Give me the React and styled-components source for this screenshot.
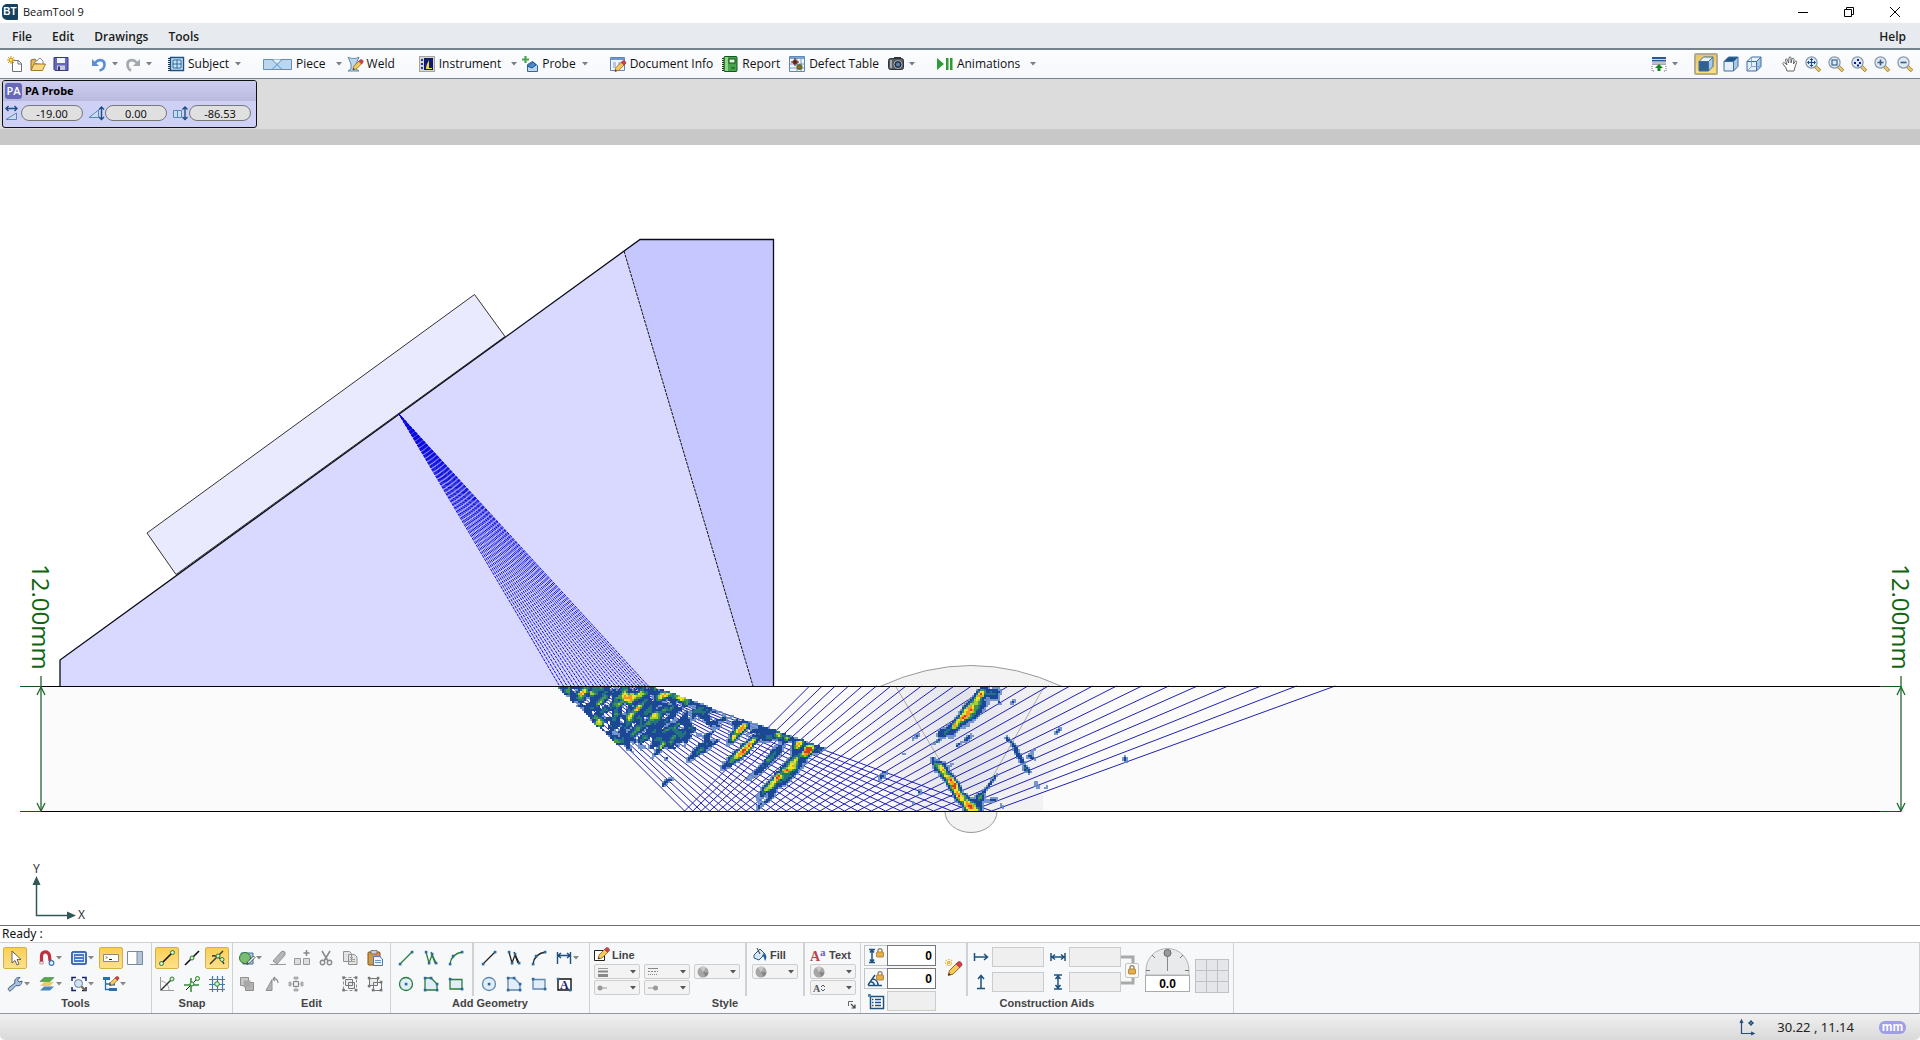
import React from "react";
import styled, { createGlobalStyle } from "styled-components";

const UI = '"Open Sans", "Noto Sans", sans-serif';
const TAHOMA = '"Noto Sans", "Open Sans", sans-serif';
const ARIAL = '"Liberation Sans", Arial, sans-serif';

const Global = createGlobalStyle`
  *, *::before, *::after { box-sizing: border-box; }
  body { margin: 0; background: #fff; color: #111; font: 12px/16px ${UI}; }
  button, input, select { font: inherit; color: inherit; margin: 0; }
  svg { display: block; flex: none; overflow: visible; }
`;

/* ---------- frame ---------- */

const Shell = styled.div`
  display: flex;
  flex-direction: column;
  height: 100vh;
  overflow: hidden;
`;

const TitleBar = styled.header`
  display: flex;
  align-items: center;
  height: 23px;
  padding: 0 2px;
  font-size: 11px;
`;

const AppLogo = styled.span`
  display: grid;
  place-items: center;
  width: 16px;
  height: 16px;
  margin-right: 5px;
  border-radius: 5px 1px 1px 5px;
  background: #15405f;
  color: #fff;
  font: bold 10px/16px ${ARIAL};
`;

const WindowControls = styled.div`
  display: flex;
  margin-left: auto;
`;

const WindowButton = styled.button`
  display: grid;
  place-items: center;
  width: 46px;
  height: 22px;
  padding: 0;
  border: 0;
  background: none;
`;

const MenuBar = styled.nav`
  display: flex;
  gap: 20px;
  height: 27px;
  padding: 2px 14px 0 12px;
  align-items: center;
  background: #e7ebef;
  border-bottom: 2px solid #76828f;
`;

const MenuButton = styled.button`
  padding: 0;
  border: 0;
  background: none;
  color: #1b1b1b;
  font: 600 12px/20px ${UI};
  margin-left: ${(p) => (p.$end ? "auto" : "0")};
`;

const Toolbar = styled.div`
  display: flex;
  align-items: center;
  height: 29px;
  padding: 0 7px;
  background: linear-gradient(#fbfcfe, #f6f8fb);
  border-bottom: 1px solid #76819a;
`;

const ToolGroup = styled.div`
  display: flex;
  align-items: center;
  gap: ${(p) => p.$gap}px;
  margin-left: ${(p) => (p.$end ? "auto" : `${p.$lead || 0}px`)};
`;

const ToolButton = styled.button`
  display: flex;
  align-items: center;
  gap: 4px;
  height: 22px;
  padding: ${(p) => (p.$active ? "0 2px" : "0")};
  border: ${(p) => (p.$active ? "2px solid #b2ab91" : "0")};
  border-radius: 2px;
  background: ${(p) => (p.$active ? "linear-gradient(#e8c763, #fbe07c)" : "none")};
  white-space: nowrap;
`;

const CaretGap = styled.span`
  padding-left: ${(p) => p.$space}px;
`;

const ProbeStrip = styled.section`
  padding: 1px 2px;
  background: #dcdcdc;
`;

const ProbeCard = styled.div`
  width: 255px;
  height: 48px;
  border: 1px solid #111;
  border-radius: 3px;
  background: #cfd0f5;
  overflow: hidden;
`;

const ProbeHead = styled.h2`
  display: flex;
  align-items: center;
  gap: 3px;
  height: 20px;
  margin: 0;
  padding: 0 2px;
  background: linear-gradient(#cdcdf0, #b9bade);
  color: #000;
  font: bold 11px/16px ${TAHOMA};
`;

const ProbeBadge = styled.span`
  width: 17px;
  height: 16px;
  border-radius: 3px;
  background: #6868b8;
  color: #fff;
  font: 600 11px/16px ${UI};
  text-align: center;
`;

const ProbeFields = styled.div`
  display: grid;
  grid-template-columns: repeat(3, 80px);
  gap: 4px;
  padding: 4px 1px 0;
`;

const ProbeField = styled.label`
  display: flex;
  align-items: center;
  gap: 1px;
`;

const PillInput = styled.input`
  width: 62px;
  height: 16px;
  padding: 0;
  border: 1px solid #777;
  border-radius: 8px;
  background: #e0e0e0;
  font: 11px/14px ${TAHOMA};
  text-align: center;
`;

const StripShadow = styled.div`
  height: 16px;
  background: #c8c8c8;
`;

const Workspace = styled.main`
  flex: 1;
  min-height: 0;

  > svg { width: 100%; height: 100%; }
`;

const Prompt = styled.div`
  height: 17px;
  padding-left: 2px;
  border-top: 1px solid #6c6c70;
  font: 12px/16px ${TAHOMA};
`;

/* ---------- ribbon ---------- */

const Ribbon = styled.div`
  display: flex;
  align-items: stretch;
  border: 1px solid #cfd0d2;
  border-width: 1px 1px 1px 0;
  border-bottom-color: #8f96a3;
  background: #f7f8fa;
`;

const Group = styled.section`
  display: grid;
  grid-template-rows: 53px 17px;
  border-right: 1px solid #cfd0d2;
`;

const GroupBody = styled.div`
  display: flex;
  gap: ${(p) => p.$gap || 0}px;
  padding: ${(p) => p.$pad};
`;

const GroupLabel = styled.h3`
  display: grid;
  grid-template-columns: 1fr auto 1fr;
  align-items: start;
  margin: 0;
  padding: 0 4px;
  color: #444;
  font: bold 11px/15px ${ARIAL};

  > span { grid-column: 2; }
  > button { justify-self: end; align-self: center; }
`;

const Rows = styled.div`
  display: grid;
  align-content: start;
  gap: ${(p) => p.$gap ?? 4}px;
`;

const Cols = styled.div`
  display: grid;
  grid-template-columns: ${(p) => p.$cols};
  height: 22px;
`;

const RibbonButton = styled.button`
  display: flex;
  align-items: center;
  justify-self: start;
  gap: 1px;
  height: 22px;
  padding: 0 3px;
  border: 1px solid ${(p) => (p.$active ? "#d5ae45" : "transparent")};
  border-radius: 2px;
  background: ${(p) => (p.$active ? "linear-gradient(#f9cf54, #fde08c)" : "none")};
`;

const Rule = styled.div`
  width: 2px;
  height: 53px;
  margin: 0 ${(p) => p.$space}px;
  background: #d0d1d3;
`;

const StyleColumn = styled.div`
  display: grid;
  grid-template-rows: 19px;
  align-content: start;
`;

const StyleTitle = styled.div`
  display: flex;
  align-items: center;
  gap: 3px;
  color: #444;
  font: bold 11px/16px ${ARIAL};
`;

const SelectGrid = styled.div`
  display: grid;
  grid-template-columns: repeat(${(p) => p.$cols}, 46px);
  gap: 1px 4px;
`;

const SelectBox = styled.label`
  display: grid;
  grid-template-columns: 1fr auto;
  align-items: center;
  height: 15px;
  padding: 0 3px 0 2px;
  border: 1px solid #cdcdcd;
  border-radius: 2px;
  background: #f3f3f3;

  > select {
    grid-area: 1 / 1 / 2 / 3;
    width: 100%;
    height: 13px;
    padding: 0;
    border: 0;
    appearance: none;
    background: none;
  }
  > svg:first-of-type { grid-area: 1 / 1; }
  > svg:last-of-type { grid-area: 1 / 2; }
`;

const SmallButton = styled.button`
  display: grid;
  place-items: center;
  padding: 0;
  border: 0;
  background: none;
`;

const AidGroup = styled(Group)`
  > :nth-child(1) { grid-area: 1 / 1 / 3 / 2; }
  > :nth-child(2) { grid-area: 1 / 2; }
  > :nth-child(3) { grid-area: 2 / 1 / 3 / 3; }
`;

const LockStack = styled.div`
  display: grid;
  grid-template-rows: repeat(3, 21px);
  gap: 2px;
  padding: 2px 0 0 3px;
`;

const LockRow = styled.div`
  display: grid;
  grid-template-columns: 23px 49px;
`;

const LockToggle = styled.button`
  display: grid;
  place-items: center;
  padding: 0;
  border: 1px solid ${(p) => (p.$plain ? "transparent" : "#c4c5c8")};
  border-right: 0;
  background: none;
`;

const NumberInput = styled.input`
  width: ${(p) => p.$width}px;
  height: ${(p) => p.$height}px;
  padding: 0 3px;
  border: 1px solid ${(p) => (p.disabled ? "#cbcbcb" : "#777")};
  background: ${(p) => (p.disabled ? "#efefef" : "#fff")};
  color: #000;
  font: bold 12px/16px ${ARIAL};
  text-align: right;
`;

const AidFields = styled.div`
  display: grid;
  grid-template-columns: repeat(2, 71px);
  grid-template-rows: 20px 20px;
  gap: 5px 6px;
  padding: 4px 0 0 5px;
`;

const AidField = styled.label`
  display: flex;
  align-items: center;
  gap: 3px;
`;

const LinkBracket = styled.div`
  display: grid;
  grid-template-columns: 14px 4px;
  align-items: center;
  height: 44px;
  margin-top: 5px;

  > svg { grid-area: 1 / 1; }
  > button { grid-area: 1 / 1 / 2 / 3; justify-self: end; }
`;

const LinkButton = styled.button`
  display: grid;
  place-items: center;
  width: 14px;
  height: 15px;
  padding: 0;
  border: 1px solid #c4c4c4;
  border-radius: 2px;
  background: #f8f8f8;
`;

const AngleDial = styled.label`
  width: 45px;
  margin: 5px 5px 0 6px;

  > input {
    display: block;
    width: 45px;
    height: 17px;
    padding: 0;
    border: 1px solid #aaa;
    background: #fff;
    color: #000;
    font: bold 12px/15px ${ARIAL};
    text-align: center;
  }
`;

const Swatches = styled.button`
  display: grid;
  grid-template-columns: repeat(3, 1fr);
  gap: 1px;
  width: 34px;
  height: 34px;
  margin: 16px 4px 0 0;
  padding: 1px;
  border: 0;
  background: #bfc1c4;

  > span { background: #e4e6e9; }
`;

const StatusBar = styled.footer`
  display: flex;
  align-items: center;
  justify-content: flex-end;
  height: 26px;
  padding-right: 14px;
  border-radius: 0 0 5px 5px;
  background: linear-gradient(#f0f0f0, #d9d9d9);
  color: #222;
  font: 13px/18px ${TAHOMA};
`;

const Coordinates = styled.output`
  margin: 0 25px 0 22px;
`;

const UnitButton = styled.button`
  width: 27px;
  height: 13px;
  padding: 0;
  border: 0;
  border-radius: 6px;
  background: #a09fe6;
  color: #fff;
  font: bold 12px/10px ${ARIAL};
`;

/* ---------- icons ---------- */

const Svg = ({ w = 16, h = 16, vb, children }) => (
  <svg width={w} height={h} viewBox={vb || `0 0 ${w} ${h}`} fill="none" aria-hidden="true">
    {children}
  </svg>
);

const Caret = ({ color = "#777c88" }) => (
  <Svg w={6} h={4}><path d="M0 0h6L3 3.500z" fill={color} /></Svg>
);

const Dots = ({ pts, c = "#2d6a9a" }) => pts.map(([x, y]) => (
  <rect key={`${x}-${y}`} x={x - 1.2} y={y - 1.2} width="2.600" height="2.600" fill={c} />
));

const Rings = ({ pts, r = 2, c = "#2c7d35" }) => pts.map(([x, y]) => (
  <circle key={`${x}-${y}`} cx={x} cy={y} r={r} fill="#d9f0c4" stroke={c} />
));

const Pencil = ({ x = 0, y = 0, s = 1 }) => (
  <g transform={`translate(${x} ${y}) scale(${s})`}>
    <path d="M1 12l1-4 6-6 3 3-6 6z" fill="#f4c95c" stroke="#94601c" strokeWidth=".8" />
    <path d="M7.500 2.500L9.500.5c1.500-.5 3.500 1.500 3 3l-2 2z" fill="#d0404a" stroke="#8e2a30" strokeWidth=".5" />
    <path d="M1 12l.7-2 1.400 1.400z" fill="#222" />
  </g>
);

const Padlock = ({ x = 0, y = 0 }) => (
  <g transform={`translate(${x} ${y})`}>
    <path d="M2 4V2.600a2 2 0 014 0V4" stroke="#8a8069" strokeWidth="1.300" />
    <rect x=".5" y="4" width="7" height="5" rx=".8" fill="#e5ad4b" stroke="#a97722" strokeWidth=".8" />
  </g>
);

const Lens = ({ children }) => (
  <Svg>
    <path d="M10 10l5 5" stroke="#a88434" strokeWidth="3.600" />
    <path d="M10.500 10.500l4 4" stroke="#eacb73" strokeWidth="2" />
    <circle cx="6.500" cy="6.500" r="5.600" fill="#dce9f7" stroke="#8796a6" strokeWidth="1.200" />
    {children}
  </Svg>
);

const Cube = ({ front = "#e3eefa", top = "#e9f2fc", side = "#a9c8e8", wire }) => (
  <Svg>
    <path d="M1 5.500L5.500 1H15l-4.500 4.500z" fill={top} />
    <path d="M10.500 5.500L15 1v9.500L10.500 15z" fill={side} />
    <path d="M1 5.500h9.500V15H1z" fill={front} />
    <path d="M1 5.500L5.500 1H15v9.500L10.500 15H1zM1 5.500h9.500V15M10.500 5.500L15 1" stroke="#3e6d9c" />
    {wire && <path d="M5.500 1v9.500H15M5.500 10.500L1 15" stroke="#6e97c1" strokeWidth=".8" />}
  </Svg>
);

const ICONS = {
  new: <Svg><path d="M5.500 4.500h6l3 3v8h-9z" fill="#fff" stroke="#69727d" /><path d="M11 4.500v3.500h3.500" stroke="#69727d" /><path d="M4 0v8M0 4h8M1 1l6 6M7 1L1 7" stroke="#d99a10" /><circle cx="4" cy="4" r="1.800" fill="#ffe569" stroke="#d89c15" /></Svg>,
  open: <Svg><path d="M1 14V4l4-1 1 2h6v2" fill="#e6b85a" stroke="#946b21" /><path d="M4 7l6-5 3 3v4z" fill="#fff" stroke="#7f8b97" /><path d="M1 14.500L4 8h11.500l-3 6.500z" fill="#f7d784" stroke="#a67b2a" /></Svg>,
  save: <Svg><path d="M1 1.500h14v13H2l-1-1z" fill="#6668c0" stroke="#34367e" /><path d="M4 2h8v5H4z" fill="#f2f4fb" /><path d="M4 9.500h8V14H4z" fill="#c7cbd8" /><path d="M5 10.500h2V14H5z" fill="#2f3278" /></Svg>,
  undo: <Svg><path d="M4 7c4-5 10-3 9.500 2-.2 3-2.500 5-5 5.500" stroke="#5b8ed2" strokeWidth="2.600" /><path d="M1 3v7h7z" fill="#5b8ed2" /></Svg>,
  redo: <Svg><path d="M12 7C8 2 2 4 2.500 9c.2 3 1.500 4.500 3.500 5.500" stroke="#a3a8ae" strokeWidth="2.600" /><path d="M15 3v7H8z" fill="#a3a8ae" /></Svg>,
  subject: <Svg><path d="M2.500 1.500h13v13h-13z" fill="#cbe3f5" stroke="#1c4f82" strokeWidth="1.400" /><path d="M9 3.500v9M4.500 8h9M5 4h8v8H5z" stroke="#2f6a9f" /><path d="M1 2v13" stroke="#0f3559" strokeWidth="2" strokeDasharray="1 1" /></Svg>,
  piece: <Svg w={29} h={13}><path d="M.5 1.500h28v10H.5z" fill="#bdd6ee" stroke="#5f8fbb" /><path d="M9 1.500l10 10M19 1.500l-10 10" stroke="#5f8fbb" /><path d="M10 1.500h8l-4 4z" fill="#e6f0f9" /></Svg>,
  weld: <Svg><path d="M1 1c2 2 9 2 11 0L9 8v5l3 2H1l3-2V8z" fill="#bcd7ee" stroke="#5d88ad" /><Pencil x={5} y={3} s={0.9} /></Svg>,
  instrument: <Svg><rect x=".5" y=".5" width="15" height="15" fill="#d7d7d2" stroke="#a5a59d" /><path d="M2 3h2v2H2zM2 7h2v2H2zM2 11h2v2H2z" fill="#2438b8" /><rect x="5" y="2" width="9" height="12" fill="#101b6e" /><path d="M7 12c1-6 3-6 3-9v9h3v1H7z" fill="#f1d93a" /></Svg>,
  probe: <Svg><path d="M3.500 0v7M0 3.500h7" stroke="#4aa552" strokeWidth="2.200" /><path d="M5.500 8.500l5-3 5 4v6h-10z" fill="#bcd6f2" stroke="#35679d" /><path d="M5 10l6-4 3 3-4 3z" fill="#4b8bd0" stroke="#235488" /></Svg>,
  docinfo: <Svg><path d="M.5 1.500h14v13H.5z" fill="#eef4fb" stroke="#5e86b6" /><path d="M1 2h13v2H1z" fill="#6d98cc" /><path d="M3 7h3M3 9h3M3 11h3M8 7h5M8 9h4" stroke="#7f9dc0" /><Pencil x={4} y={4} s={0.95} /></Svg>,
  report: <Svg><rect x="2" y=".5" width="13" height="15" rx="1" fill="#46a64b" stroke="#125620" /><path d="M3 1h3v14H3z" fill="#8ed784" /><rect x="7" y="3" width="6" height="4" fill="#def5d7" stroke="#174f20" /><path d="M1 2v13" stroke="#1f3d22" strokeWidth="2" strokeDasharray="1 1" /><path d="M9 12h4" stroke="#174f20" /></Svg>,
  defect: <Svg><path d="M.5.500h15v15H.5z" fill="#f0f5fc" stroke="#5e86b6" /><path d="M1 1h14v2H1z" fill="#7da3d2" /><path d="M1 8h14M1 12h14M8 3v12M12 3v12" stroke="#5e86b6" strokeWidth=".8" /><circle cx="6" cy="6" r="2.500" fill="#8d3b22" /><path d="M2 6h8M6 2v8" stroke="#4d2016" /><circle cx="10.500" cy="11" r="3" fill="#56762b" /><circle cx="10.500" cy="11" r="1.300" fill="#c55224" /></Svg>,
  camera: <Svg><rect x=".5" y="2.500" width="15" height="11" rx="2" fill="#575b61" stroke="#303338" /><path d="M2 4h2v8H2z" fill="#a7abb0" /><circle cx="10" cy="8.500" r="4" fill="#262a30" stroke="#a5b4c5" /><circle cx="10" cy="8.500" r="2" fill="#5d83b3" /><path d="M6 1h7v2H6z" fill="#303338" /></Svg>,
  anim: <Svg><path d="M0 2v12l7-6z" fill="#2f9a35" /><path d="M9 2h2.500v12H9zM13 2h2.500v12H13z" fill="#2f9a35" /></Svg>,
  dock: <Svg><path d="M1 1h14v4H1z" fill="#2f5597" /><path d="M1 5h14v4H1z" fill="#a4a9b1" /><path d="M1 3.500h14M1 7h14" stroke="#d4dbe6" /><path d="M8 8l4 4H9.500v3h-3v-3H4z" fill="#16861b" /><path d="M1 10v5h3M15 10v5h-3" stroke="#707680" strokeDasharray="1 1" /></Svg>,
  hand: <Svg><path d="M5 15l-1-3-3-4c-1-1 1-2 2-1l2 2L3.500 4c0-1.500 1.500-1.500 2 0l1 3L7 2c0-1.500 2-1.500 2 0v5l1-4c.5-1.300 2-1 2 .5L11.500 8l1.500-2.500c.8-1 2-.2 1.600 1L13 11l-1 4z" fill="#fff" stroke="#555" strokeWidth=".9" /></Svg>,
  pan: <Lens><path d="M6.500 2.500v8M2.500 6.500h8M5 4l1.500-1.500L8 4M5 9l1.500 1.500L8 9M4 5L2.500 6.500 4 8M9 5l1.500 1.500L9 8" stroke="#1f4c8d" /></Lens>,
  zoomWindow: <Lens><rect x="4" y="4" width="5" height="5" stroke="#3f6688" strokeWidth="1.200" /></Lens>,
  zoomAll: <Lens><path d="M3 6h2v2H3zM6 3h2v2H6zM8 6h2v2H8zM6 8.500h2v2H6z" fill="#12189a" /></Lens>,
  zoomIn: <Lens><path d="M6.500 3.500v6M3.500 6.500h6" stroke="#3c5d7d" strokeWidth="1.600" /></Lens>,
  zoomOut: <Lens><path d="M3.500 6.500h6" stroke="#3c5d7d" strokeWidth="1.600" /></Lens>,
  skew: <Svg><path d="M2 3.500h11M4.500 1L2 3.500 4.500 6M10.500 1L13 3.500 10.500 6" stroke="#1d4f85" strokeWidth="1.400" /><path d="M2 14.500h10.500V8z" fill="#c8dcef" stroke="#5a88b4" /></Svg>,
  height: <Svg><path d="M1 12.500h9.500V5z" fill="#c8dcef" stroke="#5a88b4" /><path d="M13.500 3v11M11 4.500L13.500 2 16 4.500M11 12l2.500 2.500L16 12" stroke="#1d4f85" strokeWidth="1.400" /></Svg>,
  offset: <Svg><path d="M1.500 5.500h8v7h-8zM5.500 5.500v7" fill="#c8dcef" stroke="#5a88b4" /><path d="M13 3v11M10.500 4.500L13 2l2.500 2.500M10.500 12l2.500 2.500 2.500-2.500" stroke="#1d4f85" strokeWidth="1.400" /></Svg>,

  select: <Svg><path d="M5 1v12l3-2.500L10 15l2-1-2-4.500h4z" fill="#fff" stroke="#555" strokeWidth=".9" /></Svg>,
  magnet: <Svg><path d="M2.500 13V6.500C2.500.5 10 .5 10.500 6l.5 5" stroke="#c22e3a" strokeWidth="3.200" /><path d="M.8 11.500h3.400V14H.8z" fill="#f3e6e6" stroke="#955" strokeWidth=".5" /><circle cx="12.500" cy="13" r="2.300" fill="#eaf4ff" stroke="#3a76b8" strokeWidth="1.200" /></Svg>,
  screen: <Svg><rect x=".7" y="1.700" width="14.600" height="12.600" rx="1" fill="#4a78cc" stroke="#2a4f9e" /><rect x="2.500" y="3.500" width="11" height="9" fill="#4a78cc" stroke="#e5effb" /><path d="M4 6.500h8M4 9.500h8" stroke="#e5effb" /></Svg>,
  command: <Svg><path d="M.5 4.500h15v7H.5z" fill="#fff" stroke="#8a8a8a" /><path d="M3 6.500l1 1-1 1M6 9.500h3" stroke="#222" /></Svg>,
  panel: <Svg><path d="M.5 1.500h15v13H.5z" fill="#fff" stroke="#7c8996" /><path d="M10 1.500h5.500v13H10z" fill="#b3c7da" stroke="#7c8996" /></Svg>,
  wrench: <Svg><path d="M2 14.500c-1-1-1-2 0-3L8 7C7 4 9 1 13 1.500L10.500 4l1.500 2 3-1c0 4-3 5.500-6 4.500l-5 5c-.7.700-1.300.700-2 0z" fill="#a9c1db" stroke="#3d5d82" /></Svg>,
  layers: <Svg><path d="M1 14.500l4-4h10l-4 4z" fill="#4a86c6" /><path d="M1 10l4-4h10l-4 4z" fill="#e8cf60" /><path d="M1 5.500l4-4h10l-4 4z" fill="#57a74b" stroke="#2f7b2e" strokeWidth=".5" /></Svg>,
  zoomBox: <Svg><path d="M1 5V1.500h4M11 1.500h4V5M1 11v3.500h4M15 11v3.500h-4" stroke="#15206b" strokeWidth="1.500" /><circle cx="7.500" cy="7.500" r="4" fill="#cfe1f3" stroke="#68809a" /><path d="M10.500 10.500l4 4" stroke="#7d5f31" strokeWidth="2" /></Svg>,
  tree: <Svg><path d="M0 1h7v3H0zM6 6.500h6v3H6zM6 12h8v3H6z" fill="#276fae" /><path d="M2.500 4v9.500H6M2.500 8H6" stroke="#276fae" strokeWidth="1.300" /><Pencil x={6} y={0} s={0.8} /></Svg>,

  snapEnd: <Svg><path d="M2 14L14 2" stroke="#111" strokeWidth="1.600" /><Rings pts={[[2.5, 13.5], [13.5, 2.5]]} /></Svg>,
  snapMid: <Svg><path d="M1 15L15 1" stroke="#111" strokeWidth="1.600" /><Rings pts={[[8, 8]]} /></Svg>,
  snapNear: <Svg><path d="M1 14L14 1M3 6c5-1 9 2 12 8" stroke="#333" strokeWidth="1.400" /><Rings pts={[[9, 6], [13, 9.5]]} /></Svg>,
  snapAngle: <Svg><path d="M1.500 1v13.500H15" stroke="#999" /><path d="M1 5c5 0 9 4 9 9" stroke="#aaa" /><path d="M2 14L13 3" stroke="#333" strokeWidth="1.500" /><Rings pts={[[13, 3]]} /></Svg>,
  snapCross: <Svg><path d="M0 9h15M7 2v14" stroke="#2c8c35" strokeWidth="1.500" /><path d="M2 14L14 2" stroke="#222" /><Rings pts={[[8, 8], [13.5, 2.5]]} /></Svg>,
  snapGrid: <Svg><path d="M0 3.500h16M0 8.500h16M0 13.500h16M3.500 0v16M8.500 0v16M13.500 0v16" stroke="#3f7cb5" strokeWidth="1.200" /><Rings pts={[[8, 8]]} r={2.3} /></Svg>,

  region: <Svg><path d="M2 3h12v11H4z" fill="#a9c9ea" stroke="#486f96" /><circle cx="6" cy="8" r="5.500" fill="#78bd72" stroke="#2b7b33" /><path d="M8 14.500l1-3 5.500-5.500 1.500 1.500-5.500 5.500z" fill="#eef1f5" stroke="#333" strokeWidth=".8" /></Svg>,
  erase: <Svg><path d="M3 11L12 1l3 1v3l-8 9z" fill="#b5b5b5" stroke="#959595" /><path d="M0 14.500h16" stroke="#999" /></Svg>,
  copyAdd: <Svg><path d="M.5 8.500h6v6h-6zM9.500 8.500h6v6h-6z" fill="#dedede" stroke="#999" /><path d="M12.500 0v6M9.500 3h6" stroke="#888" strokeWidth="1.500" /></Svg>,
  cut: <Svg><path d="M4 1l6 10M12 1L6 11" stroke="#8b8b8b" strokeWidth="1.600" /><circle cx="4.500" cy="12.500" r="2.200" stroke="#8b8b8b" strokeWidth="1.400" /><circle cx="11.500" cy="12.500" r="2.200" stroke="#8b8b8b" strokeWidth="1.400" /></Svg>,
  copy: <Svg><path d="M1.500 1.500h6l2 2v8h-8zM6.500 4.500h6l2.500 2.500v7.500H6.500z" fill="#e3e3e3" stroke="#929292" /><path d="M8 9.500h5M8 11.500h5M8 7.500h3" stroke="#a2a2a2" /></Svg>,
  paste: <Svg><rect x="1" y="2" width="12" height="13" rx="1" fill="#d49b3e" stroke="#7b5620" /><path d="M4 .5h6V4H4z" fill="#cbd0d6" stroke="#666" strokeWidth=".8" /><path d="M6.500 6.500h6L15.500 9v6.500h-9z" fill="#f1f6fc" stroke="#4c78a9" /><path d="M8 10.500h6M8 12.500h6" stroke="#6c94c0" /></Svg>,
  order: <Svg><path d="M1.500 1.500h8v8h-8z" fill="#c9c9c9" stroke="#8f8f8f" /><path d="M6.500 6.500h8v8h-8z" fill="#b4b4b4" stroke="#8f8f8f" /><path d="M4.500 4.500h7v7h-7z" fill="#a8a8a8" /></Svg>,
  rotate: <Svg><path d="M2 14.500h6v-11z" fill="#b5b5b5" stroke="#909090" /><path d="M9 3c3-1 5 1 5 4M9 3l2-2M9 3l2 2" stroke="#888" strokeWidth="1.200" /></Svg>,
  explode: <Svg><path d="M8 1v14M1 8h14" stroke="#999" strokeDasharray="2 1" /><rect x="5.500" y="5.500" width="5" height="5" fill="#e6e6e6" stroke="#8a8a8a" /><path d="M6 1h4v2H6zM6 13h4v2H6zM1 6h2v4H1zM13 6h2v4h-2z" fill="#bdbdbd" stroke="#8a8a8a" strokeWidth=".6" /></Svg>,
  group: <Svg><path d="M1.500 1.500h13v13h-13z" stroke="#8e8e8e" strokeDasharray="3 2" /><path d="M3.500 3.500h7v6h-7zM6.500 6.500h6v6h-6z" fill="#ececec" stroke="#777" /><Dots pts={[[1.5, 1.5], [14, 1.5], [1.5, 14], [14, 14]]} c="#777" /></Svg>,
  ungroup: <Svg><path d="M2.500 2.500h8v7h-8z" fill="#ececec" stroke="#777" /><path d="M6.500 6.500h8v8h-8z" stroke="#777" /><Dots pts={[[2, 2], [11, 2], [2, 10], [14, 6], [14, 14], [6, 14]]} c="#777" /></Svg>,

  pencilBox: <Svg w={15}><path d="M.5 3.500h10v10H.5z" fill="#fff" stroke="#222" /><Pencil x={3} y={0} /></Svg>,
  bucket: <Svg w={15}><path d="M2 8l6-6 5 5-6 6-5-2z" fill="#d7e6f4" stroke="#2c567f" /><path d="M5 1l3 6" stroke="#333" /><path d="M12 6c3 2 3 5 1 8-1-3-1-5-3-5z" fill="#1f5f9f" /></Svg>,
  draw: <Svg w={17} h={17}><Pencil x={2} y={2} s={1.2} /><path d="M4 0v8M0 4h8M1 1l6 6M7 1L1 7" stroke="#e3b426" strokeDasharray="1 1" strokeWidth="1.400" /></Svg>,
  right: <Svg><path d="M1.500 4v8M2 8h12M11 5l3.500 3-3.500 3" stroke="#1d517e" strokeWidth="1.500" /></Svg>,
  up: <Svg><path d="M8 14V2M5 5l3-3.500L11 5M4 14.500h8" stroke="#1d517e" strokeWidth="1.500" /></Svg>,
  spanX: <Svg><path d="M1 4v8M15 4v8M2 8h12M5 5.500L2 8l3 2.500M11 5.500L14 8l-3 2.500" stroke="#1d517e" strokeWidth="1.500" /></Svg>,
  spanY: <Svg><path d="M4 1h8M4 15h8M8 2v12M5.500 5L8 2l2.500 3M5.500 11L8 14l2.500-3" stroke="#1d517e" strokeWidth="1.500" /></Svg>,
  lockLength: <Svg w={18}><path d="M2 1.500h6M2 14.500h6M5 2v12M3 4.500L5 2l2 2.500M3 11.500L5 14l2-2.500" stroke="#1d517e" strokeWidth="1.500" /><Padlock x={9} /></Svg>,
  lockAngle: <Svg w={18}><path d="M1 14.500h14M1 14L8 4M5 8c4 0 6 3 6 6M4 11c2 0 3 1 3 3" stroke="#1d517e" strokeWidth="1.500" /><Padlock x={9} /></Svg>,
  list: <Svg><path d="M2.500 2.500h13v12h-13z" fill="#fff" stroke="#1d517e" strokeWidth="1.500" /><path d="M4 5.500h1.500M4 8.500h1.500M4 11.500h1.500M7 5.500h6M7 8.500h6M7 11.500h6" stroke="#1d517e" strokeWidth="1.500" /><path d="M0 0h3v3H0z" fill="#4b87bb" /></Svg>,
  launcher: <Svg w={8} h={8}><path d="M.5 5V.5H5" stroke="#666" /><path d="M3 3l4 4M7 3.500V7H3.500" stroke="#444" strokeWidth="1.200" /></Svg>,
  weight: <Svg w={12} h={10}><path d="M1 1.500h10" stroke="#999" /><path d="M1 4.500h10" stroke="#888" strokeWidth="2" /><path d="M1 8.500h10" stroke="#888" strokeWidth="3" /></Svg>,
  dash: <Svg w={12} h={10}><path d="M1 1.500h10" stroke="#888" /><path d="M1 4.500h10" stroke="#888" strokeDasharray="2 1" /><path d="M1 7.500h10" stroke="#888" strokeDasharray="1 1" /></Svg>,
  ball: <Svg w={12} h={12}><circle cx="6" cy="6" r="5.500" fill="#a6a6a6" /><path d="M6 6L3 1.500A5.500 5.500 0 019 1.500z" fill="#c9c9c9" /><path d="M6 6l5.500.500a5.500 5.500 0 01-3 4.300z" fill="#858585" /></Svg>,
  capStart: <Svg w={12} h={10}><circle cx="3" cy="5" r="2.500" fill="#999" /><path d="M3 5h7" stroke="#999" /></Svg>,
  capEnd: <Svg w={12} h={10}><circle cx="8.500" cy="5" r="2.500" fill="#999" /><path d="M1 5h7" stroke="#999" /></Svg>,
  origin: <Svg><path d="M2.500 2v12.500H14M1 4l1.500-3L4 4M12 13l3 1.500L12 16" stroke="#1f4f80" strokeWidth="1.200" /><path d="M12 1v6M9 4h6" stroke="#1f4f80" /><circle cx="12" cy="4" r="1.700" stroke="#1f4f80" /></Svg>,
};

/* Geometry tools share their shapes; the green set draws construction parts, the other annotations. */
const SHAPES = {
  line: { d: "M2 14L14 2", pts: [[2, 14], [14, 2]] },
  poly: { d: "M3 2l3 11 3-8 3 8M8 2l5 11", pts: [[3, 2], [6, 13], [9, 4], [13, 13]] },
  arc: { d: "M2 14C3 7 7 3 15 2", pts: [[2, 14], [5, 6], [14, 2]] },
  circle: { d: "M8 1.500a6.500 6.500 0 100 13 6.500 6.500 0 100-13z", pts: [[8, 8]], fill: 1 },
  polygon: { d: "M2 2h6l6 6v6H2z", pts: [[2, 2], [8, 2], [14, 8], [14, 14], [2, 14]], fill: 1 },
  rect: { d: "M2 3.500h12v9.500H2z", pts: [[2, 3], [14, 13]], fill: 1 },
};

const Shape = ({ name, green }) => {
  const s = SHAPES[name];
  const stroke = green ? "#2a7d3c" : s.fill ? "#5f87b3" : "#222";
  return (
    <Svg>
      <path d={s.d} stroke={stroke} strokeWidth="1.300" fill={s.fill ? "#e1edf8" : "none"} />
      <Dots pts={s.pts} />
    </Svg>
  );
};

/* ---------- scan drawing ---------- */

const SURFACE = 686;
const BACKWALL = 811;
const SOURCE = { x: 399, y: 414 };
const VELOCITY_RATIO = 0.719;

/* One beam per degree from 45 to 70, refracted at the surface and reflected at the back wall. */
const BEAMS = Array.from({ length: 26 }, (_, i) => {
  const angle = ((45 + i) * Math.PI) / 180;
  const wedge = Math.asin(Math.sin(angle) * VELOCITY_RATIO);
  const entry = SOURCE.x + (SURFACE - SOURCE.y) * Math.tan(wedge);
  const leg = (BACKWALL - SURFACE) * Math.tan(angle);
  return { entry, floor: entry + leg, exit: entry + 2 * leg };
});

/* Echoes: centre x, centre y, half length, half width, rise angle, amplitude */
const ECHOES = [
  [583, 692, 9, 5, 20, 0.85], [628, 696, 9, 5, 20, 0.8], [634, 710, 12, 4, 50, 0.85], [654, 713, 10, 4, 40, 0.75],
  [662, 694, 10, 6, 10, 0.7], [682, 698, 10, 5, -20, 0.75], [597, 720, 8, 6, 30, 0.6], [612, 738, 10, 8, 40, 0.42],
  [660, 746, 12, 3, 50, 0.6], [603, 694, 6, 6, 30, 0.5], [640, 728, 12, 4, 45, 0.5], [616, 706, 8, 5, 30, 0.5],
  [683, 732, 14, 5, 35, 0.42], [705, 745, 11, 6, 35, 0.4], [693, 754, 11, 4, 45, 0.32], [670, 725, 10, 5, 40, 0.4],
  [702, 708, 10, 5, -20, 0.5], [668, 779, 7, 2.5, 25, 0.3], [663, 784, 4, 2, 50, 0.28], [665, 758, 4, 2, 50, 0.28],
  [735, 733, 11, 4, 52, 0.93], [745, 725, 6, 4, 10, 0.6], [745, 747, 15, 4, 45, 0.8], [733, 757, 22, 5, 42, 0.36],
  [771, 734, 14, 6, 15, 0.5], [760, 726, 8, 4, -10, 0.35], [785, 737, 10, 4, -15, 0.42], [762, 766, 20, 4, 42, 0.42],
  [775, 750, 14, 4, 45, 0.38], [798, 744, 8, 5, 50, 0.8], [807, 749, 9, 4, 50, 0.9], [792, 761, 12, 5, 46, 0.55],
  [778, 775, 12, 4, 46, 0.7], [764, 789, 12, 4, 46, 0.45], [788, 774, 26, 6, 44, 0.38], [758, 806, 5, 3, 50, 0.28],
  [818, 748, 8, 4, 10, 0.42], [768, 798, 8, 3, 50, 0.28],
  [979, 694, 8, 4, 55, 0.7], [968, 708, 15, 5, 50, 0.8], [955, 724, 10, 4, 45, 0.7], [975, 712, 20, 6, 48, 0.36],
  [943, 731, 9, 5, 25, 0.4], [992, 692, 8, 6, 20, 0.36], [936, 741, 6, 1.5, 35, 0.35], [951, 736, 4, 3, 60, 0.3],
  [967, 737, 7, 3, 40, 0.3], [957, 744, 4, 2, 30, 0.28], [915, 736, 6, 2.5, 45, 0.28], [903, 753, 5, 2, 35, 0.24],
  [998, 701, 5, 2, -55, 0.28], [1012, 701, 5, 2.5, 50, 0.28], [1057, 730, 6, 2.5, 50, 0.28],
  [1006, 738, 4, 2, -50, 0.3], [1017, 753, 17, 3, -62, 0.42], [1030, 753, 7, 3, 50, 0.28], [1032, 757, 5, 2, -30, 0.28],
  [1026, 769, 5, 2.5, -40, 0.3], [1036, 784, 5, 3, -60, 0.3], [1045, 787, 2, 3, 0, 0.28], [1124, 758, 5, 3, -70, 0.28],
  [932, 759, 4, 2, -60, 0.3], [938, 765, 8, 6, -50, 0.42], [946, 775, 12, 5, -52, 0.6], [956, 790, 16, 5, -57, 0.75],
  [968, 804, 12, 5, -42, 0.6], [975, 809, 8, 4, 10, 0.5], [979, 797, 8, 5, 40, 0.36], [989, 783, 17, 2, 53, 0.36],
  [951, 763, 4, 2, 35, 0.26], [993, 799, 8, 3, 15, 0.28], [1001, 805, 6, 2, -55, 0.26],
  [880, 776, 5, 4, 20, 0.3], [884, 771, 2, 3, 70, 0.28], [919, 791, 3, 5, 0, 0.26], [912, 802, 2, 3, 0, 0.26],
];

const PALETTE = [
  [0.98, "#d4401c"], [0.84, "#f4942a"], [0.72, "#f0e12f"], [0.63, "#a6cc3c"], [0.54, "#459850"],
  [0.45, "#24747f"], [0.26, "#1b4795"], [0.15, "#6288c4"],
];

const hash = (x, y) => {
  const n = Math.sin(x * 127.1 + y * 311.7) * 43758.5453;
  return n - Math.floor(n);
};

const noise = (x, y) => {
  const ix = Math.floor(x);
  const iy = Math.floor(y);
  const fx = x - ix;
  const fy = y - iy;
  const a = hash(ix, iy) * (1 - fx) + hash(ix + 1, iy) * fx;
  const b = hash(ix, iy + 1) * (1 - fx) + hash(ix + 1, iy + 1) * fx;
  return a * (1 - fy) + b * fy;
};

const amplitudeAt = (x, y) => {
  const grain = noise((x * 0.77 - y * 0.64) / 6, (x * 0.64 + y * 0.77) / 3.5);
  const fine = noise(x / 3.3 + 40, y / 3.3);
  let echo = 0;
  for (const [cx, cy, len, wid, deg, amp] of ECHOES) {
    const r = (deg * Math.PI) / 180;
    const dx = x - cx;
    const dy = y - cy;
    const u = (dx * Math.cos(r) - dy * Math.sin(r)) / len;
    const v = (dx * Math.sin(r) + dy * Math.cos(r)) / wid;
    const d = u * u + v * v;
    if (d < 6) echo += amp * Math.exp(-d);
  }
  let value = echo * (0.45 + grain * 0.5 + fine * 0.6);
  const roof = SURFACE + Math.max(0, (x - 652) * 0.36);
  const left = 556 + (y - SURFACE) * 1.05;
  const floor = x < 625 ? 752 : 752 - (x - 625) * 0.1;
  if (x > left && y > roof && y < floor) {
    const fade = x < 660 ? 1 : Math.max(0, 1 - (x - 660) / 190);
    const depth = 1 - Math.max(0, (y - roof) / (floor - roof)) * 0.25;
    const band = y - roof < 10 && x < 830 ? 0.75 : 0;
    const n = (grain * 0.75 + fine * 0.35) * Math.max(fade * depth, band);
    if (n > 0.36) value = Math.max(value, 0.2 + (n - 0.36) * 0.85 + echo * 0.35);
  }
  if (x < 850 && (y < roof - 1 || x < left - 1)) value = 0;
  return value;
};

const CELL = 2;

const SCAN_LAYERS = (() => {
  const paths = PALETTE.map(() => "");
  for (let y = SURFACE + 1; y < BACKWALL; y += CELL) {
    let start = 0;
    let level = -1;
    for (let x = 550; x <= 1140; x += CELL) {
      const value = amplitudeAt(x, y);
      const next = PALETTE.findIndex(([min]) => value >= min);
      if (next !== level) {
        if (level >= 0) paths[level] += `M${start} ${y}H${x}v${CELL}H${start}z`;
        start = x;
        level = next;
      }
    }
  }
  return paths;
})();

const Dimension = ({ tail, head, x }) => (
  <g stroke="#1c6b2a">
    <path d={`M${tail} 686.500H${head}M${tail} 811.500H${head}`} stroke="#0c5a12" />
    <path d={`M${x} 676v135`} stroke="#3f7a4c" strokeWidth="1.500" />
    <path d={`M${x - 4} 695L${x} 687l4 8M${x - 4} 803l4 8 4-8`} fill="none" strokeWidth="1.300" />
    <text transform={`translate(${x - 9} 564) rotate(90)`} fill="#0f650f" stroke="none"
      fontFamily={UI} fontSize="24">12.00mm</text>
  </g>
);

const ScanPlan = () => (
  <svg viewBox="0 145 1920 780" role="img" aria-label="Scan plan">
    <defs>
      <linearGradient id="zone" x1="0" x2="1">
        <stop offset="0" stopColor="#e4e4ec" stopOpacity="0" />
        <stop offset=".45" stopColor="#e0e0ea" stopOpacity=".9" />
        <stop offset="1" stopColor="#e8e8f0" stopOpacity="0" />
      </linearGradient>
    </defs>
    <rect x="41" y="686" width="1860" height="125" fill="#fbfbfb" />
    <path d="M60 686.500V660L640 239.500h133.500v447z" fill="#d9d9ff" />
    <path d="M624 251l16-11.500h133.500v447H753z" fill="#c7c7ff" />
    <path d="M176 574.500L147 533 474.500 294.500 505 336.500z" fill="#eaeaff" stroke="#333" strokeWidth="1" />
    <path d="M60 686.500V660L640 239.500h133.500v447" fill="none" stroke="#0b0b18" strokeWidth="1.300" />
    <path d="M624 251l129 435" stroke="#111" strokeDasharray="3 1" />
    <path d="M840 687h270l-67 103v21H899z" fill="url(#zone)" />
    <path d="M899 811V790h144v21z" fill="#f2f2f4" opacity=".7" />
    <g fill="#f3f3f3" stroke="#999">
      <path d="M880 686.500Q971 644.500 1062 686.500z" />
      <path d="M945 811.500a26 21 0 0052 0z" />
    </g>
    <path d="M896 687l74 124M1044 687l-71 124" stroke="#aaa" />
    {BEAMS.map((b) => (
      <g key={b.entry} fill="none">
        <path d={`M${SOURCE.x} ${SOURCE.y}L${b.entry} ${SURFACE}`} stroke="#0a0ae0" strokeDasharray="3 1" />
        <path d={`M${b.entry} ${SURFACE}L${b.floor} ${BACKWALL}L${b.exit} ${SURFACE}`} stroke="#2020b4" />
      </g>
    ))}
    {SCAN_LAYERS.map((d, i) => <path key={PALETTE[i][1]} d={d} fill={PALETTE[i][1]} opacity={i > 6 ? 0.85 : 1} />)}
    <path d="M41 686.500h1839M41 811.500h1839" stroke="#000" />
    <Dimension tail={20} head={41} x={41} />
    <Dimension tail={1880} head={1901} x={1901} />
    <g fill="#315858">
      <path d="M36.500 884v31.500H68" fill="none" stroke="#315858" strokeWidth="1.500" />
      <path d="M36.500 876l4 9h-8zM76 915.500l-9-4v8z" />
    </g>
    <g fill="#333" fontFamily={TAHOMA} fontSize="12">
      <text x="33" y="873">Y</text>
      <text x="78" y="919">X</text>
    </g>
  </svg>
);

/* ---------- composed controls ---------- */

const Tool = ({ icon, text, label, caret, space = 5, active }) => (
  <ToolButton type="button" $active={active} aria-label={label || text}>
    {typeof icon === "string" ? ICONS[icon] : icon}
    {text}
    {caret && <CaretGap $space={space - 4}><Caret /></CaretGap>}
  </ToolButton>
);

const RTool = ({ icon, label, caret, active }) => (
  <RibbonButton type="button" aria-label={label} $active={active}>
    {typeof icon === "string" ? ICONS[icon] : icon}
    {caret && <Caret color="#888" />}
  </RibbonButton>
);

const Picker = ({ icon, label }) => (
  <SelectBox>
    <select aria-label={label} defaultValue=""><option value="" /></select>
    {typeof icon === "string" ? ICONS[icon] : icon}
    <Caret color="#555" />
  </SelectBox>
);

const RibbonGroup = ({ label, pad, gap, launcher, children }) => (
  <Group>
    <GroupBody $pad={pad} $gap={gap}>{children}</GroupBody>
    <GroupLabel>
      <span>{label}</span>
      {launcher && <SmallButton type="button" aria-label={`${label} options`}>{ICONS.launcher}</SmallButton>}
    </GroupLabel>
  </Group>
);

const GEOMETRY = [["line", "poly", "arc"], ["circle", "polygon", "rect"]];

const TextGlyph = () => (
  <Svg>
    <path d="M2 3h13v11H2z" fill="#fff" stroke="#111" strokeWidth="1.400" />
    <text x="4" y="13" fontFamily="Liberation Serif, serif" fontWeight="bold" fontSize="12" fill="#23236b">A</text>
    <Dots pts={[[2, 3], [14, 14]]} />
  </Svg>
);

const App = () => (
  <>
    <Global />
    <Shell>
      <TitleBar>
        <AppLogo>BT</AppLogo>
        <span>BeamTool 9</span>
        <WindowControls>
          <WindowButton type="button" aria-label="Minimize"><Svg w={10} h={10}><path d="M0 5.500h10" stroke="#000" /></Svg></WindowButton>
          <WindowButton type="button" aria-label="Restore"><Svg w={10} h={10}><path d="M.5 2.500h7v7h-7zM2.500 2.500v-2h7v7h-2" stroke="#000" /></Svg></WindowButton>
          <WindowButton type="button" aria-label="Close"><Svg w={10} h={10}><path d="M0 0l10 10M10 0L0 10" stroke="#000" /></Svg></WindowButton>
        </WindowControls>
      </TitleBar>

      <MenuBar>
        <MenuButton type="button">File</MenuButton>
        <MenuButton type="button">Edit</MenuButton>
        <MenuButton type="button">Drawings</MenuButton>
        <MenuButton type="button">Tools</MenuButton>
        <MenuButton type="button" $end>Help</MenuButton>
      </MenuBar>

      <Toolbar>
        <ToolGroup $gap={7}>
          <Tool icon="new" label="New" />
          <Tool icon="open" label="Open" />
          <Tool icon="save" label="Save" />
        </ToolGroup>
        <ToolGroup $gap={7} $lead={22}>
          <Tool icon="undo" label="Undo" caret />
          <Tool icon="redo" label="Redo" caret />
        </ToolGroup>
        <ToolGroup $lead={16}>
          <Tool icon="subject" text="Subject" caret space={6} />
        </ToolGroup>
        <ToolGroup $gap={5} $lead={22}>
          <Tool icon="piece" text="Piece" caret space={10} />
          <Tool icon="weld" text="Weld" />
        </ToolGroup>
        <ToolGroup $gap={5} $lead={24}>
          <Tool icon="instrument" text="Instrument" caret space={10} />
          <Tool icon="probe" text="Probe" caret space={6} />
        </ToolGroup>
        <ToolGroup $gap={9} $lead={22}>
          <Tool icon="docinfo" text="Document Info" />
          <Tool icon="report" text="Report" />
          <Tool icon="defect" text="Defect Table" />
          <Tool icon="camera" label="Snapshot" caret />
        </ToolGroup>
        <ToolGroup $lead={22}>
          <Tool icon="anim" text="Animations" caret space={10} />
        </ToolGroup>
        <ToolGroup $gap={20} $end>
          <ToolGroup $gap={16}>
            <Tool icon="dock" label="Docking" caret />
            <ToolGroup $gap={5}>
              <Tool icon={<Cube front="#2f628f" />} label="Front view" active />
              <Tool icon={<Cube top="#1f5688" />} label="Top view" />
              <ToolGroup $lead={2}><Tool icon={<Cube wire />} label="Solid view" /></ToolGroup>
            </ToolGroup>
          </ToolGroup>
          <ToolGroup $gap={7}>
            <Tool icon="hand" label="Pan" />
            <Tool icon="pan" label="Zoom and pan" />
            <Tool icon="zoomWindow" label="Zoom window" />
            <Tool icon="zoomAll" label="Zoom extents" />
            <Tool icon="zoomIn" label="Zoom in" />
            <Tool icon="zoomOut" label="Zoom out" />
          </ToolGroup>
        </ToolGroup>
      </Toolbar>

      <ProbeStrip>
        <ProbeCard>
          <ProbeHead><ProbeBadge>PA</ProbeBadge>PA Probe</ProbeHead>
          <ProbeFields>
            <ProbeField>{ICONS.skew}<PillInput aria-label="Index offset" defaultValue="-19.00" /></ProbeField>
            <ProbeField>{ICONS.height}<PillInput aria-label="Scan offset" defaultValue="0.00" /></ProbeField>
            <ProbeField>{ICONS.offset}<PillInput aria-label="Piece offset" defaultValue="-86.53" /></ProbeField>
          </ProbeFields>
        </ProbeCard>
      </ProbeStrip>
      <StripShadow />

      <Workspace><ScanPlan /></Workspace>

      <Prompt>Ready :</Prompt>

      <Ribbon>
        <RibbonGroup label="Tools" pad="4px 4px 0 3px">
          <Rows>
            <Cols $cols="32px 32px 32px 24px 24px">
              <RTool icon="select" label="Select" active />
              <RTool icon="magnet" label="Magnet" caret />
              <RTool icon="screen" label="Display" caret />
              <RTool icon="command" label="Command line" active />
              <RTool icon="panel" label="Side panel" />
            </Cols>
            <Cols $cols="32px 32px 32px 24px 24px">
              <RTool icon="wrench" label="Settings" caret />
              <RTool icon="layers" label="Layers" caret />
              <RTool icon="zoomBox" label="Find" caret />
              <RTool icon="tree" label="Structure" caret />
            </Cols>
          </Rows>
        </RibbonGroup>

        <RibbonGroup label="Snap" pad="4px 2px 0 3px">
          <Rows>
            <Cols $cols="25px 25px 25px">
              <RTool icon="snapEnd" label="End point" active />
              <RTool icon="snapMid" label="Mid point" />
              <RTool icon="snapNear" label="Intersection" active />
            </Cols>
            <Cols $cols="25px 25px 25px">
              <RTool icon="snapAngle" label="Angle" />
              <RTool icon="snapCross" label="Axis" />
              <RTool icon="snapGrid" label="Grid" />
            </Cols>
          </Rows>
        </RibbonGroup>

        <RibbonGroup label="Edit" pad="4px 3px 0 2px">
          <Rows>
            <Cols $cols="31px 24px 24px 24px 25px 24px">
              <RTool icon="region" label="Edit shape" caret />
              <RTool icon="erase" label="Erase" />
              <RTool icon="copyAdd" label="Duplicate" />
              <RTool icon="cut" label="Cut" />
              <RTool icon="copy" label="Copy" />
              <RTool icon="paste" label="Paste" />
            </Cols>
            <Cols $cols="25px 24px 54px 25px 24px">
              <RTool icon="order" label="Order" />
              <RTool icon="rotate" label="Rotate" />
              <RTool icon="explode" label="Explode" />
              <RTool icon="group" label="Group" />
              <RTool icon="ungroup" label="Ungroup" />
            </Cols>
          </Rows>
        </RibbonGroup>

        <RibbonGroup label="Add Geometry" pad="0 3px 0 3px">
          <GroupBody $pad="4px 0 0">
            <Rows>
              {GEOMETRY.map((row) => (
                <Cols key={row[0]} $cols="25px 25px 25px">
                  {row.map((n) => <RTool key={n} icon={<Shape name={n} green />} label={`Part ${n}`} />)}
                </Cols>
              ))}
            </Rows>
          </GroupBody>
          <Rule $space={3} />
          <GroupBody $pad="4px 0 0">
            <Rows>
              {GEOMETRY.map((row, i) => (
                <Cols key={row[0]} $cols="25px 25px 25px 34px">
                  {row.map((n) => <RTool key={n} icon={<Shape name={n} />} label={`Note ${n}`} />)}
                  {i === 0
                    ? <RTool icon={<Svg><path d="M1.500 2v12M14.500 2v12M2 5.500h12M5 3L2 5.500 5 8M11 3l3 2.500L11 8" stroke="#1d517e" strokeWidth="1.400" /></Svg>} label="Dimension" caret />
                    : <RTool icon={<TextGlyph />} label="Text" />}
                </Cols>
              ))}
            </Rows>
          </GroupBody>
        </RibbonGroup>

        <RibbonGroup label="Style" pad="0 4px" launcher>
          <GroupBody $pad="2px 0 0">
            <StyleColumn>
              <StyleTitle>{ICONS.pencilBox}Line</StyleTitle>
              <SelectGrid $cols={3}>
                <Picker icon="weight" label="Line weight" />
                <Picker icon="dash" label="Line pattern" />
                <Picker icon="ball" label="Line color" />
                <Picker icon="capStart" label="Line start" />
                <Picker icon="capEnd" label="Line end" />
              </SelectGrid>
            </StyleColumn>
          </GroupBody>
          <Rule $space={5} />
          <GroupBody $pad="2px 0 0">
            <StyleColumn>
              <StyleTitle>{ICONS.bucket}Fill</StyleTitle>
              <SelectGrid $cols={1}><Picker icon="ball" label="Fill color" /></SelectGrid>
            </StyleColumn>
          </GroupBody>
          <Rule $space={5} />
          <GroupBody $pad="2px 0 0">
            <StyleColumn>
              <StyleTitle>
                <Svg>
                  <text x="0" y="14" fontFamily="Liberation Serif, serif" fontWeight="bold" fontSize="14" fill="#bb4545">A</text>
                  <text x="10" y="9" fontFamily="Liberation Serif, serif" fontWeight="bold" fontSize="11" fill="#6a5fc0">a</text>
                </Svg>
                Text
              </StyleTitle>
              <SelectGrid $cols={1}>
                <Picker icon="ball" label="Text color" />
                <Picker
                  icon={(
                    <Svg w={14} h={10}>
                      <text x="0" y="9" fontFamily="Liberation Serif, serif" fontWeight="bold" fontSize="10" fill="#555">A</text>
                      <path d="M8 4l2-2 2 2M8 6l2 2 2-2" stroke="#555" />
                    </Svg>
                  )}
                  label="Text size"
                />
              </SelectGrid>
            </StyleColumn>
          </GroupBody>
        </RibbonGroup>

        <AidGroup>
          <LockStack>
            <LockRow>
              <LockToggle type="button" aria-label="Lock length">{ICONS.lockLength}</LockToggle>
              <NumberInput $width={49} $height={21} aria-label="Length" defaultValue="0" />
            </LockRow>
            <LockRow>
              <LockToggle type="button" aria-label="Lock angle">{ICONS.lockAngle}</LockToggle>
              <NumberInput $width={49} $height={21} aria-label="Angle" defaultValue="0" />
            </LockRow>
            <LockRow>
              <LockToggle $plain type="button" aria-label="List">{ICONS.list}</LockToggle>
              <NumberInput $width={49} $height={20} aria-label="List value" disabled />
            </LockRow>
          </LockStack>
          <GroupBody $pad="0">
            <GroupBody $pad="13px 0 0 5px">
              <RibbonButton type="button" aria-label="Draw">{ICONS.draw}</RibbonButton>
            </GroupBody>
            <Rule $space={0} />
            <AidFields>
              <AidField>{ICONS.right}<NumberInput $width={52} $height={20} aria-label="X position" disabled /></AidField>
              <AidField>{ICONS.spanX}<NumberInput $width={52} $height={20} aria-label="Width" disabled /></AidField>
              <AidField>{ICONS.up}<NumberInput $width={52} $height={20} aria-label="Y position" disabled /></AidField>
              <AidField>{ICONS.spanY}<NumberInput $width={52} $height={20} aria-label="Height" disabled /></AidField>
            </AidFields>
            <LinkBracket>
              <Svg w={14} h={30}><path d="M0 2h12v26H0" stroke="#a9a9a9" strokeWidth="3" /></Svg>
              <LinkButton type="button" aria-label="Lock proportions"><Svg w={8} h={10}><Padlock /></Svg></LinkButton>
            </LinkBracket>
            <AngleDial>
              <Svg w={45} h={27}>
                <path d="M1 27V22a21.500 21.500 0 0143 0v5z" fill="#e9eaec" stroke="#b2b2b2" />
                <path d="M1 22.500h4M40 22.500h4M7 7l3 3M38 7l-3 3" stroke="#777" />
                <path d="M22.500 9v14" stroke="#888" />
                <circle cx="22.500" cy="5" r="3.500" fill="#999" stroke="#666" />
              </Svg>
              <input aria-label="Rotation" defaultValue="0.0" />
            </AngleDial>
            <Swatches type="button" aria-label="Anchor">
              {Array.from({ length: 9 }, (_, i) => <span key={i} />)}
            </Swatches>
          </GroupBody>
          <GroupLabel><span>Construction Aids</span></GroupLabel>
        </AidGroup>
      </Ribbon>

      <StatusBar>
        {ICONS.origin}
        <Coordinates>30.22 , 11.14</Coordinates>
        <UnitButton type="button" aria-label="Units mm">mm</UnitButton>
      </StatusBar>
    </Shell>
  </>
);

export default App;
